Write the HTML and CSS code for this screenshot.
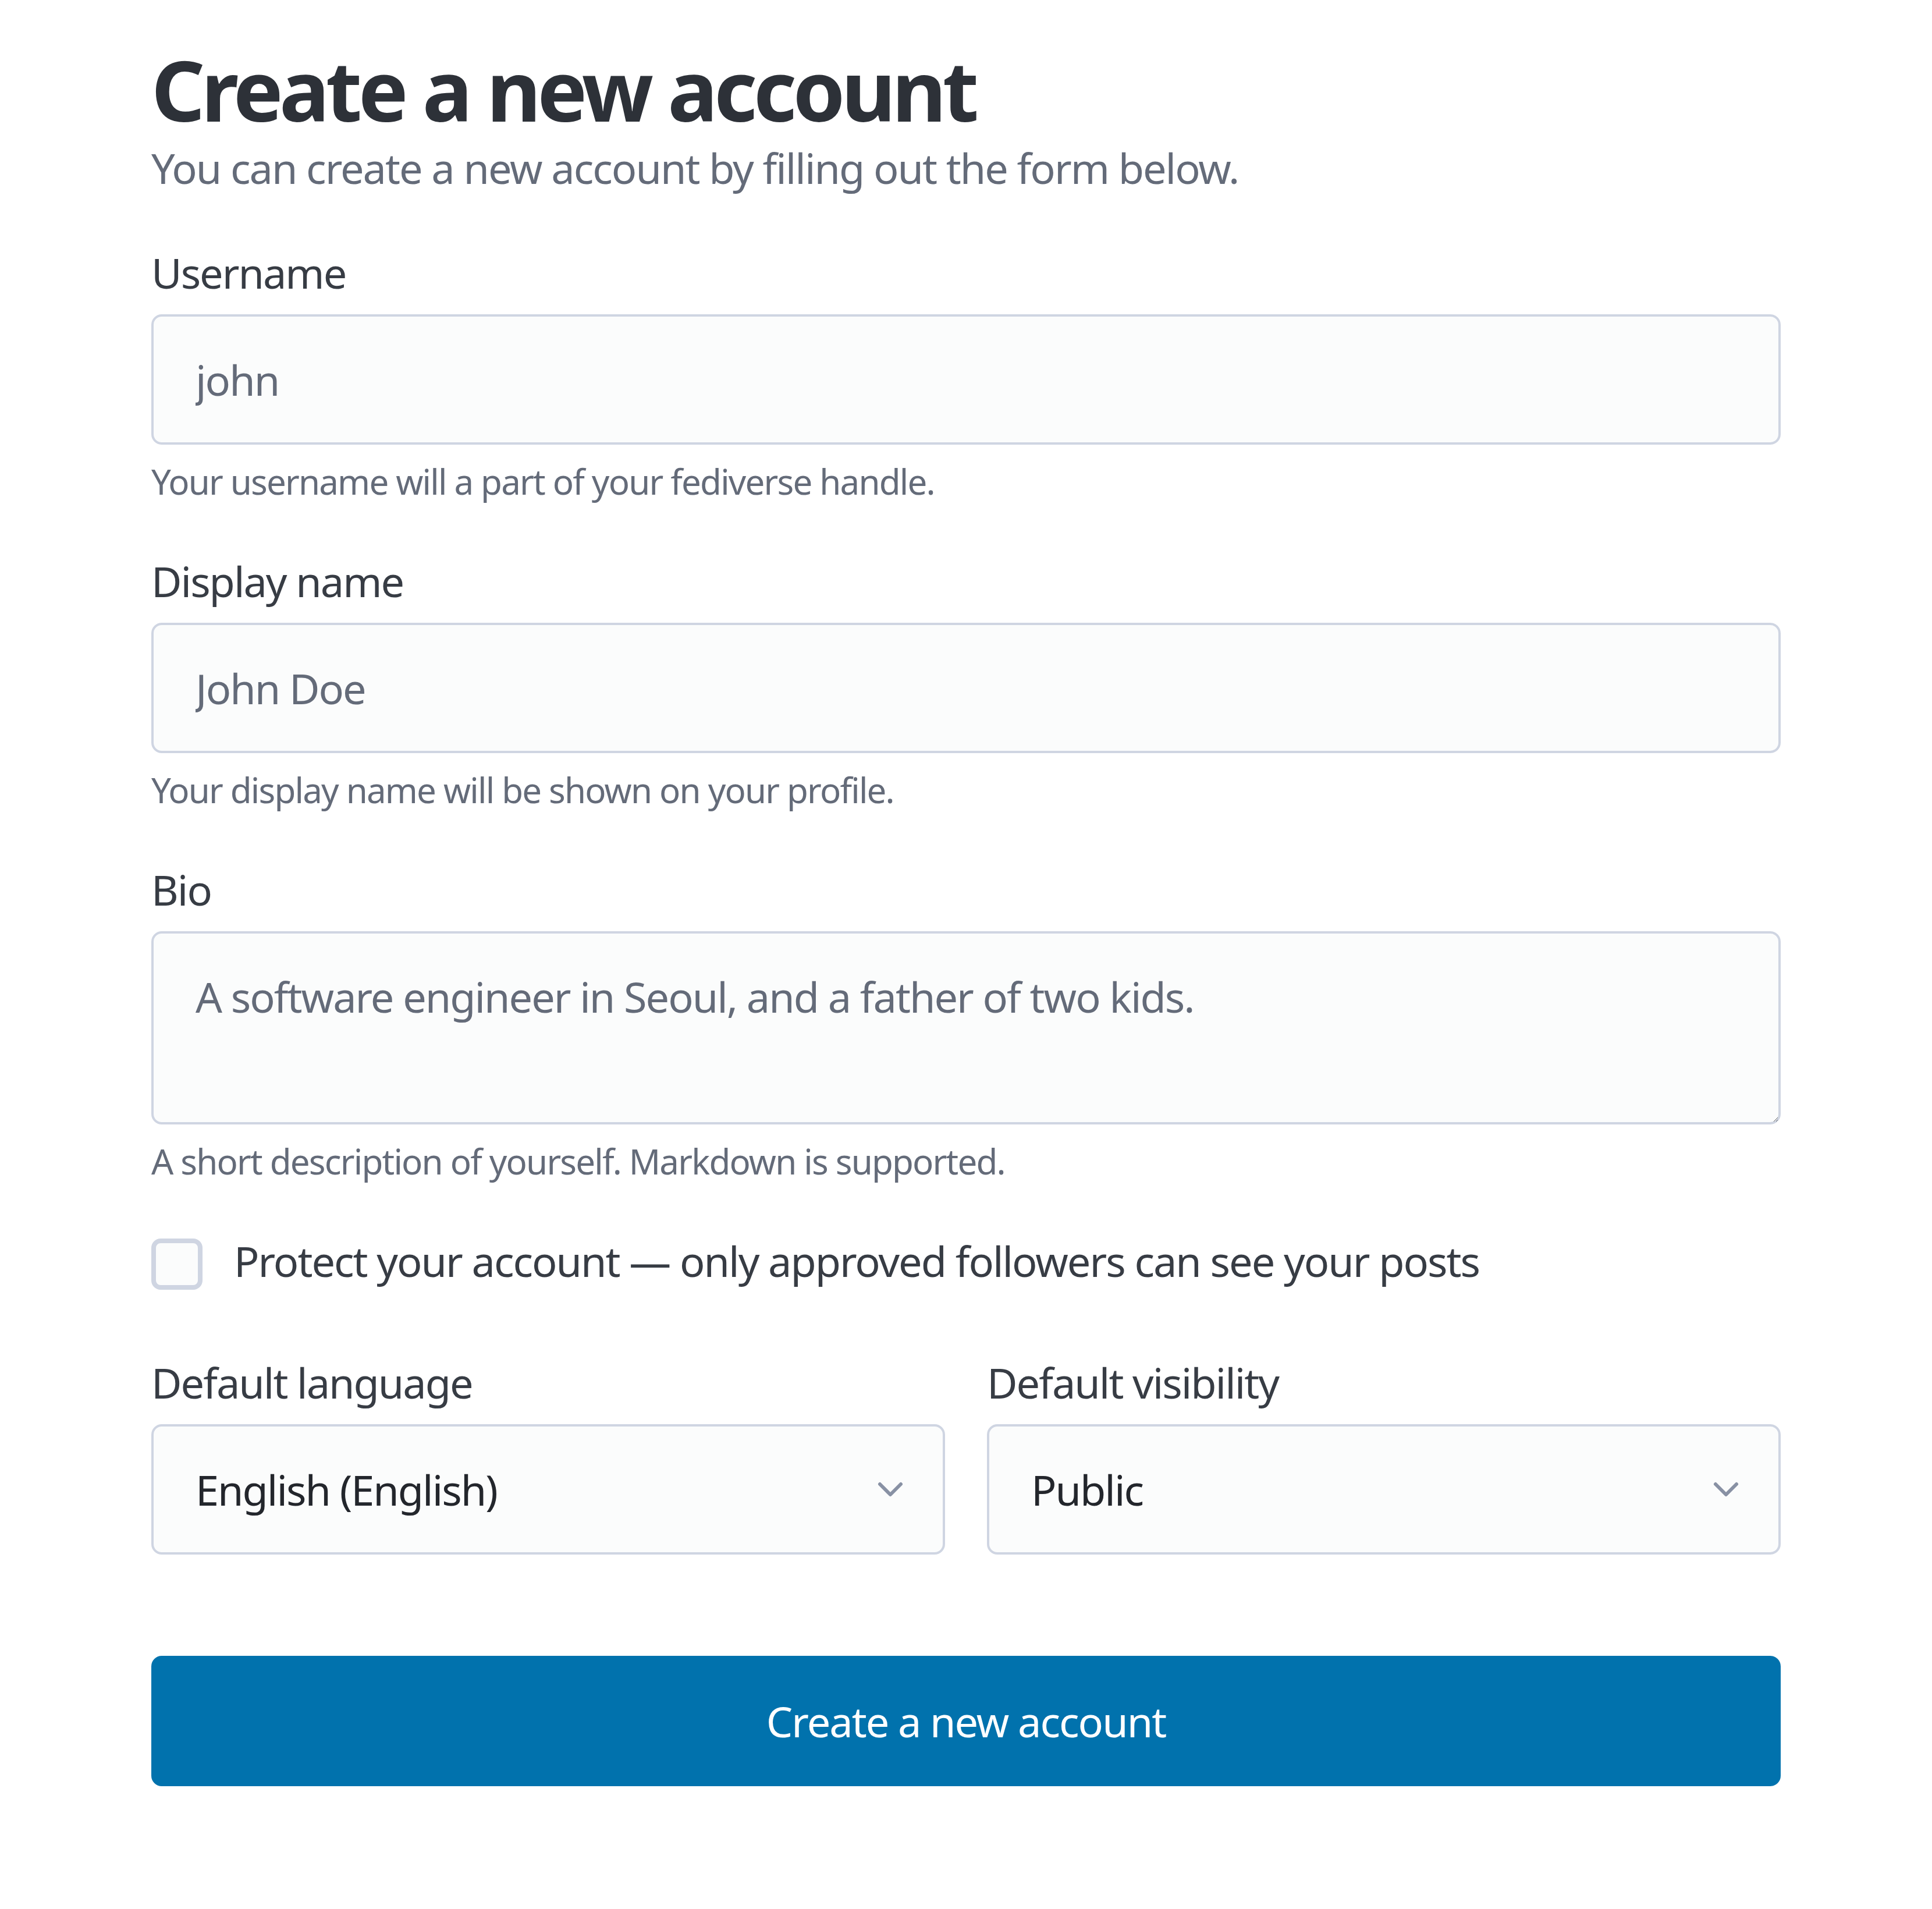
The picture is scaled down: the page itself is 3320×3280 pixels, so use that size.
FILE: index.html
```html
<!DOCTYPE html>
<html lang="en">
<head>
<meta charset="utf-8">
<title>Create a new account</title>
<link rel="stylesheet" href="styles.css">
</head>
<body>
<main class="container">
  <hgroup class="intro">
    <h1 class="title">Create a new account</h1>
    <p class="subtitle">You can create a new account by filling out the form below.</p>
  </hgroup>
  <form class="form">
    <label class="label" for="username">Username</label>
    <input class="field" id="username" type="text" placeholder="john">
    <small class="help">Your username will a part of your fediverse handle.</small>

    <label class="label" for="name">Display name</label>
    <input class="field" id="name" type="text" placeholder="John Doe">
    <small class="help">Your display name will be shown on your profile.</small>

    <label class="label" for="bio">Bio</label>
    <textarea class="field area" id="bio" rows="2" placeholder="A software engineer in Seoul, and a father of two kids."></textarea>
    <small class="help">A short description of yourself. Markdown is supported.</small>

    <label class="check-row"><input class="check" type="checkbox"> <span>Protect your account — only approved followers can see your posts</span></label>

    <div class="grid">
      <div class="col">
        <label class="label" for="lang">Default language</label>
        <div class="select-wrap">
          <select class="field select" id="lang"><option>English (English)</option></select>
          <svg class="chev" viewBox="0 0 24 24" width="72" height="72" aria-hidden="true"><polyline points="6 9 12 15 18 9" fill="none" stroke="#8891a4" stroke-width="2" stroke-linecap="round" stroke-linejoin="round"/></svg>
        </div>
      </div>
      <div class="col">
        <label class="label" for="vis">Default visibility</label>
        <div class="select-wrap">
          <select class="field select" id="vis"><option>Public</option></select>
          <svg class="chev" viewBox="0 0 24 24" width="72" height="72" aria-hidden="true"><polyline points="6 9 12 15 18 9" fill="none" stroke="#8891a4" stroke-width="2" stroke-linecap="round" stroke-linejoin="round"/></svg>
        </div>
      </div>
    </div>

    <button class="submit" type="button">Create a new account</button>
  </form>
</main>
</body>
</html>
```

FILE: styles.css
```css
* { box-sizing: border-box; }

html, body {
  margin: 0;
  padding: 0;
  background: #ffffff;
}

body {
  font-family: "Noto Sans", "Open Sans", sans-serif;
  font-size: 72px;
  line-height: 1.5;
  color: #373c44;
  letter-spacing: -2px;
}

.container {
  width: 2800px;
  margin: 0 auto;
  padding-top: 72px;
}

.intro {
  margin: 0 0 72px 0;
}

.title {
  margin: 0;
  font-size: 144px;
  line-height: 1.125;
  font-weight: 700;
  letter-spacing: -6.6px;
  color: #2d3138;
}

.subtitle {
  margin: 0;
  font-size: 72px;
  line-height: 108px;
  color: #646b79;
}

.form {
  display: flex;
  flex-direction: column;
}

.label {
  display: block;
  margin-bottom: 18px;
  font-size: 72px;
  line-height: 108px;
  color: #373c44;
}

.field {
  display: block;
  width: 100%;
  margin: 0 0 72px 0;
  padding: 54px 72px;
  font-family: inherit;
  font-size: 72px;
  line-height: 108px;
  letter-spacing: -2px;
  color: #23262c;
  background: #fbfcfc;
  border: 4px solid #cfd5e2;
  border-radius: 18px;
  outline: none;
}

.field::placeholder {
  color: #646b79;
  opacity: 1;
}

.area {
  height: 332px;
  resize: vertical;
}

.help {
  display: block;
  margin-top: -54px;
  margin-bottom: 72px;
  font-size: 60px;
  line-height: 90px;
  letter-spacing: -1.8px;
  color: #646b79;
}

.check-row {
  display: flex;
  align-items: center;
  margin-bottom: 101px;
  font-size: 72px;
  line-height: 108px;
  color: #373c44;
}

.check {
  appearance: none;
  -webkit-appearance: none;
  flex: none;
  width: 88px;
  height: 88px;
  margin: 12px 54px 0 0;
  background: #fbfcfc;
  border: 8px solid #cfd5e2;
  border-radius: 16px;
}

.grid {
  display: grid;
  grid-template-columns: 1fr 1fr;
  column-gap: 72px;
  margin-bottom: 174px;
}

.col .field {
  margin-bottom: 0;
}

.select-wrap {
  position: relative;
}

.select {
  appearance: none;
  -webkit-appearance: none;
  height: 224px;
  padding-right: 180px;
}

.chev {
  position: absolute;
  right: 58px;
  top: 76px;
  pointer-events: none;
}

.submit {
  display: block;
  width: 100%;
  padding: 54px 72px;
  font-family: inherit;
  font-size: 72px;
  line-height: 108px;
  font-weight: 400;
  letter-spacing: -2px;
  color: #ffffff;
  background: #0172ad;
  border: 4px solid #0172ad;
  border-radius: 18px;
  cursor: pointer;
}
```
